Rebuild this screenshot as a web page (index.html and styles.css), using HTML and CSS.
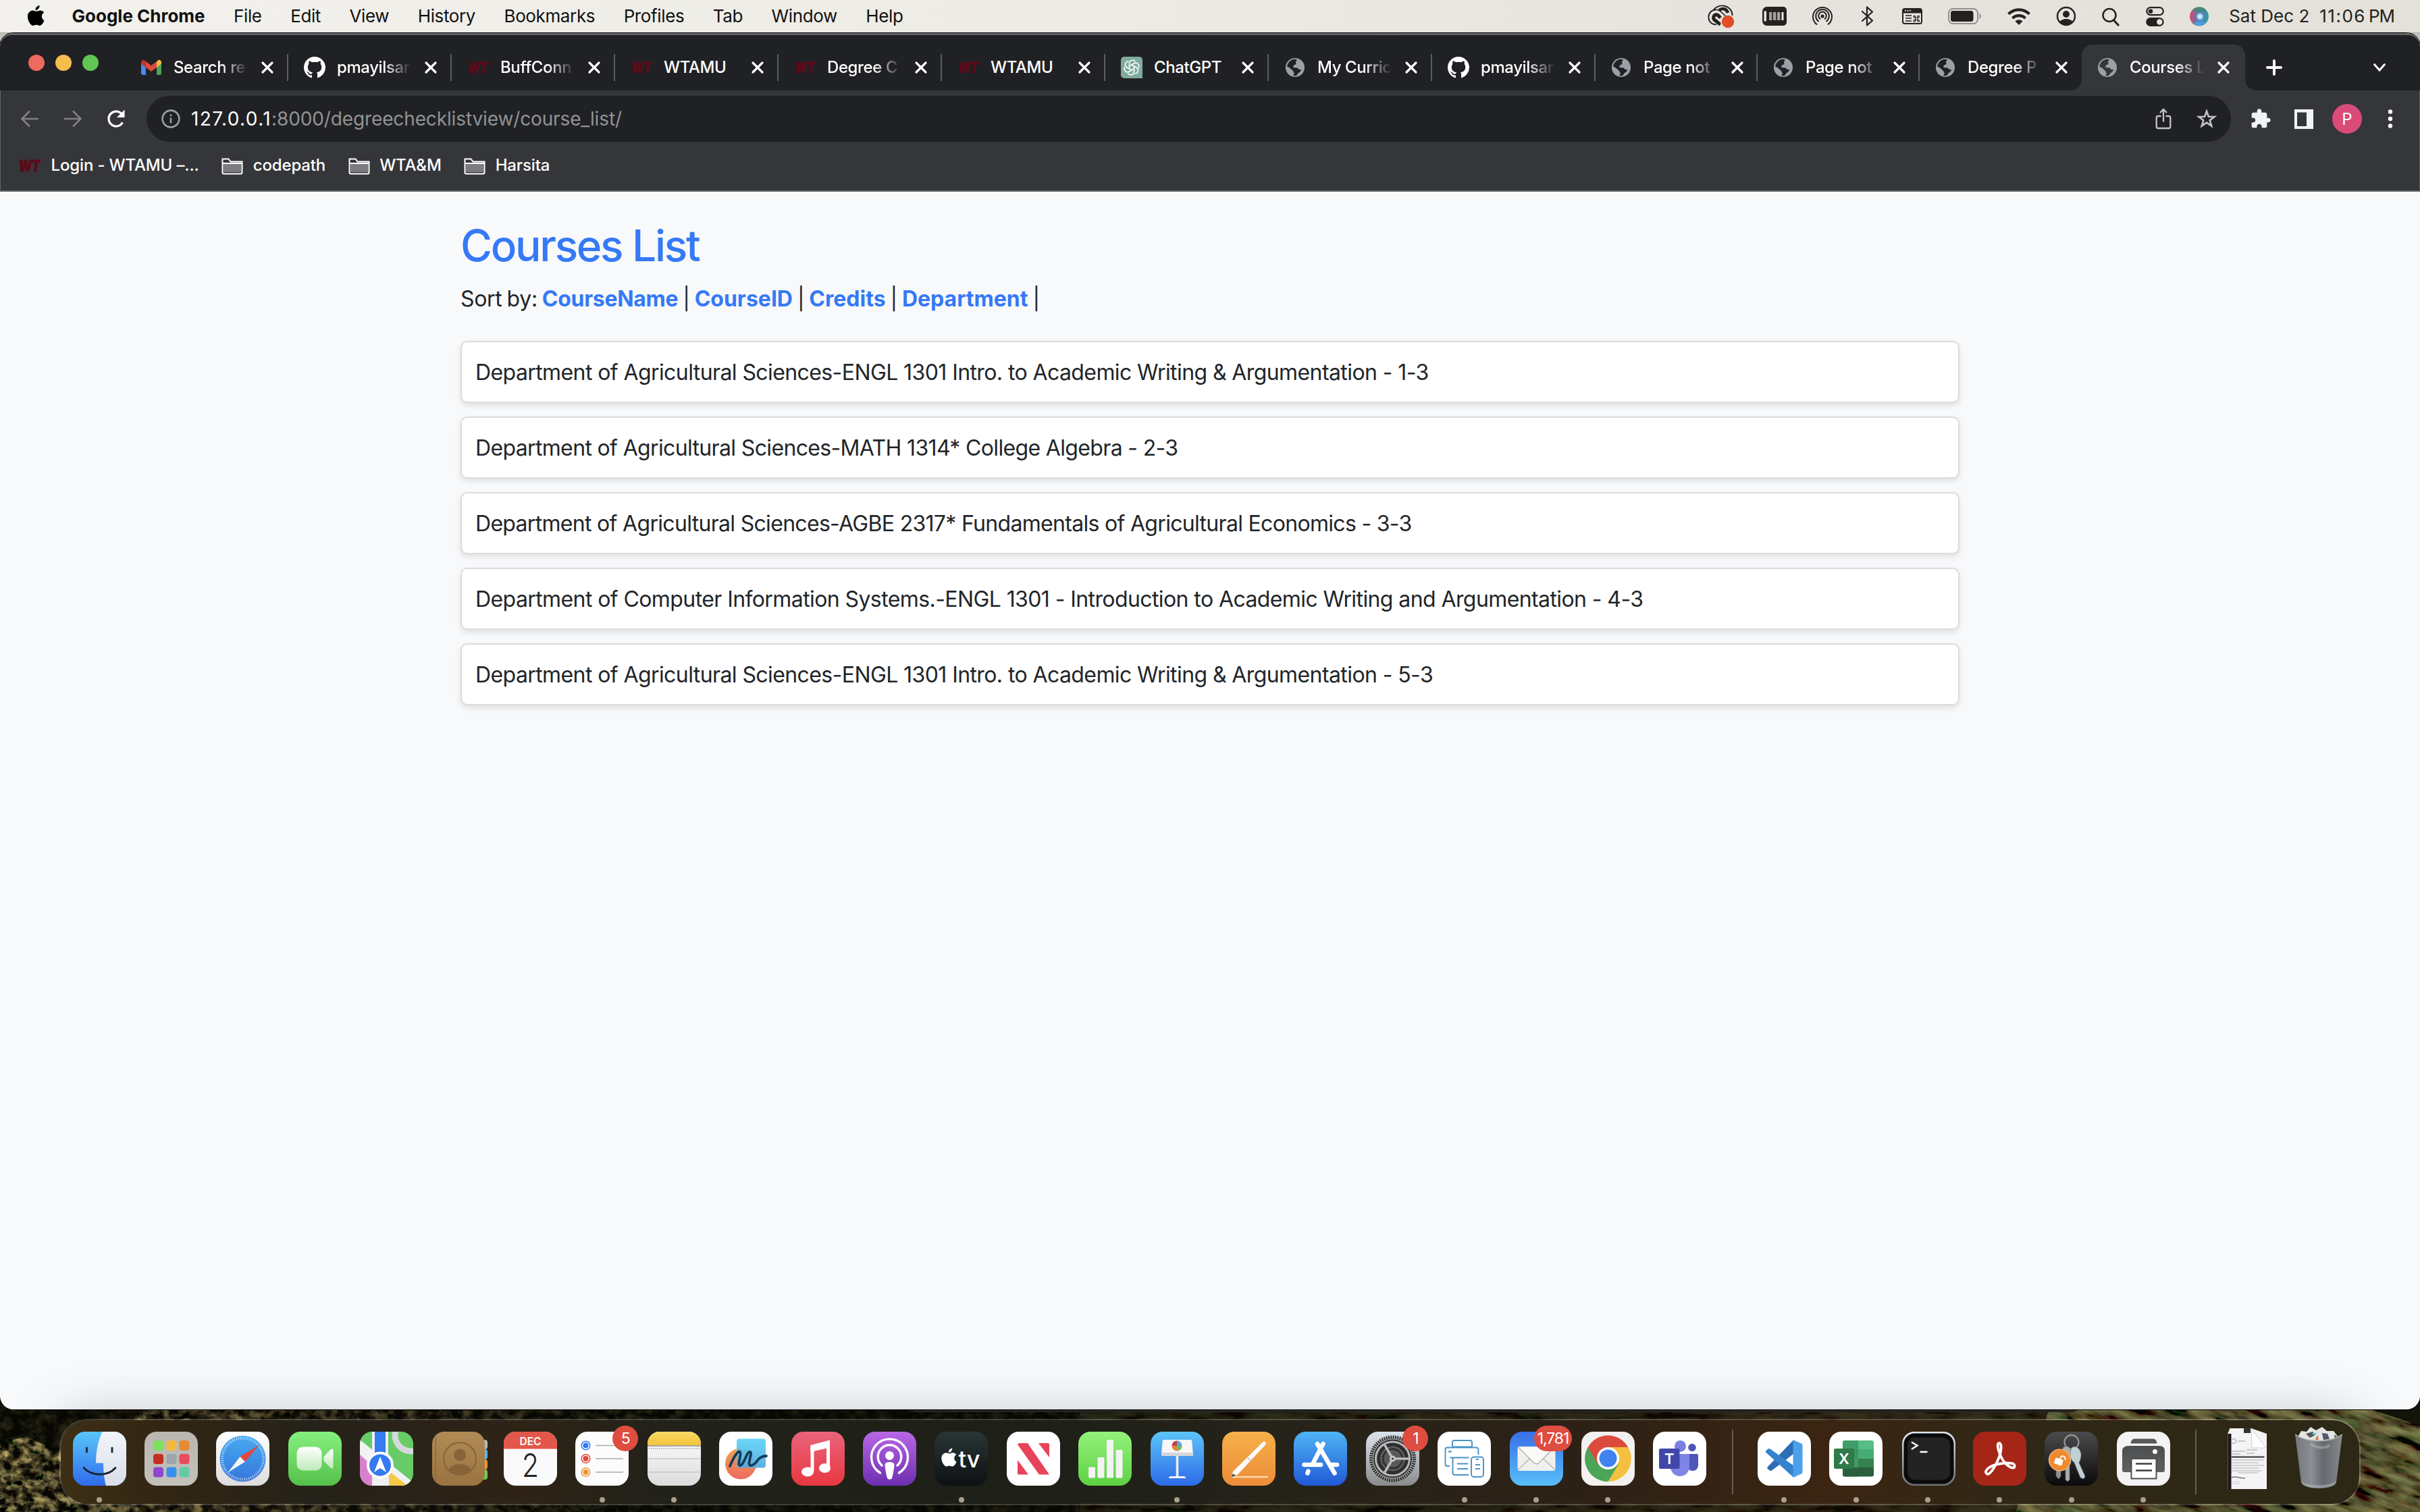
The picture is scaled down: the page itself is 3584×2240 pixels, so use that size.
FILE: index.html
```html
<!DOCTYPE html>
<html lang="en">
<head>
<meta charset="utf-8">
<title>Courses List</title>
<link rel="stylesheet" href="styles.css">
</head>
<body>
<svg class="defs" width="0" height="0" aria-hidden="true">
  <defs>
    <linearGradient id="gBlue" x1="0" y1="0" x2="0" y2="1"><stop offset="0" stop-color="#5cc4f8"/><stop offset="1" stop-color="#2d6be8"/></linearGradient>
    <linearGradient id="gFinder" x1="0" y1="0" x2="0" y2="1"><stop offset="0" stop-color="#59c5fa"/><stop offset="1" stop-color="#2f6cec"/></linearGradient>
    <linearGradient id="gFace" x1="0" y1="0" x2="0" y2="1"><stop offset="0" stop-color="#f2f5fb"/><stop offset="1" stop-color="#d9dde8"/></linearGradient>
    <linearGradient id="gWhite" x1="0" y1="0" x2="0" y2="1"><stop offset="0" stop-color="#ffffff"/><stop offset="1" stop-color="#dcdcdc"/></linearGradient>
    <linearGradient id="gGreen" x1="0" y1="0" x2="0" y2="1"><stop offset="0" stop-color="#86f07f"/><stop offset="1" stop-color="#54c14b"/></linearGradient>
    <linearGradient id="gSafari" x1="0" y1="0" x2="0" y2="1"><stop offset="0" stop-color="#47a9f0"/><stop offset="1" stop-color="#3577dc"/></linearGradient>
    <linearGradient id="gCam" x1="0" y1="0" x2="0" y2="1"><stop offset="0" stop-color="#ffffff"/><stop offset="1" stop-color="#bfeab9"/></linearGradient>
    <linearGradient id="gBrown" x1="0" y1="0" x2="0" y2="1"><stop offset="0" stop-color="#b18b56"/><stop offset="1" stop-color="#9a7340"/></linearGradient>
    <linearGradient id="gYellow" x1="0" y1="0" x2="0" y2="1"><stop offset="0" stop-color="#f9d965"/><stop offset="1" stop-color="#f5c43a"/></linearGradient>
    <linearGradient id="gMusic" x1="0" y1="0" x2="0" y2="1"><stop offset="0" stop-color="#ea647b"/><stop offset="1" stop-color="#e8373f"/></linearGradient>
    <linearGradient id="gPod" x1="0" y1="0" x2="0" y2="1"><stop offset="0" stop-color="#b967e6"/><stop offset="1" stop-color="#6c2fb0"/></linearGradient>
    <linearGradient id="gTv" x1="0" y1="0" x2="0" y2="1"><stop offset="0" stop-color="#2a3535"/><stop offset="1" stop-color="#0d1114"/></linearGradient>
    <linearGradient id="gNumbers" x1="0" y1="0" x2="0" y2="1"><stop offset="0" stop-color="#93f27b"/><stop offset="1" stop-color="#5ed043"/></linearGradient>
    <linearGradient id="gPages" x1="0" y1="0" x2="0" y2="1"><stop offset="0" stop-color="#f4b14a"/><stop offset="1" stop-color="#ee8c38"/></linearGradient>
    <linearGradient id="gStore" x1="0" y1="0" x2="0" y2="1"><stop offset="0" stop-color="#4fb4f5"/><stop offset="1" stop-color="#2059d6"/></linearGradient>
    <linearGradient id="gSet" x1="0" y1="0" x2="0" y2="1"><stop offset="0" stop-color="#dbe3ea"/><stop offset="1" stop-color="#8b8b8d"/></linearGradient>
    <linearGradient id="gMail" x1="0" y1="0" x2="0" y2="1"><stop offset="0" stop-color="#3a6fe8"/><stop offset="1" stop-color="#58bffa"/></linearGradient>
    <linearGradient id="gFree" x1="0" y1="0" x2="0" y2="1"><stop offset="0" stop-color="#f0a24a"/><stop offset="1" stop-color="#ed6a62"/></linearGradient>
    <linearGradient id="gFree2" x1="0" y1="0" x2="0" y2="1"><stop offset="0" stop-color="#5fd4f7"/><stop offset="1" stop-color="#54a9e0"/></linearGradient>
    <linearGradient id="gKey" x1="0" y1="0" x2="0" y2="1"><stop offset="0" stop-color="#4b4b4d"/><stop offset="1" stop-color="#0a0a0b"/></linearGradient>
    <linearGradient id="gTerm" x1="0" y1="0" x2="0" y2="1"><stop offset="0" stop-color="#dfeaf2"/><stop offset="1" stop-color="#6e7072"/></linearGradient>
    <linearGradient id="gTrash" x1="0" y1="0" x2="1" y2="0"><stop offset="0" stop-color="#74777b"/><stop offset=".35" stop-color="#8b8e92"/><stop offset=".6" stop-color="#65696e"/><stop offset="1" stop-color="#868a8e"/></linearGradient>
    <linearGradient id="gPrn" x1="0" y1="0" x2="0" y2="1"><stop offset="0" stop-color="#4d4e50"/><stop offset="1" stop-color="#5f6062"/></linearGradient>
    <linearGradient id="gPad" x1="0" y1="0" x2="0" y2="1"><stop offset="0" stop-color="#b9b7b0"/><stop offset="1" stop-color="#c3c1bb"/></linearGradient>
    <radialGradient id="gSiri"><stop offset="0" stop-color="#fff"/><stop offset=".35" stop-color="#9fd8f4"/><stop offset=".7" stop-color="#4a7fc9" stop-opacity=".5"/><stop offset="1" stop-color="#3a5a8c" stop-opacity="0"/></radialGradient>
    <linearGradient id="gSiri2" x1="0" y1=".3" x2="1" y2=".6"><stop offset="0" stop-color="#e2457c"/><stop offset=".45" stop-color="#7a6f94"/><stop offset="1" stop-color="#2f9fb0"/></linearGradient>
    <clipPath id="sq"><rect width="79" height="80" rx="18"/></clipPath>
    <symbol id="globe" viewBox="0 0 32 32"><circle cx="16" cy="16" r="14" fill="#9aa0a6"/><path d="M4 14.500c1-5 4-9 9-10.500 3-.5 5 0 6 1l-2 2 .5 4-4 2v3l6 .5 2.500 2.500h3c-.5 3-2 4-4 5l-3 4c-2 .5-4 .3-5-.3l2-2.500-2-4.200-5-4.500z" fill="var(--tab-bg)"/><path d="M17.500 11.200c1.500-.6 1-2.500 1-3.500l3.500-2c3 1.500 5 5 5 8.300l-3.500 3-3-2.500-3-.5z" fill="#9aa0a6"/></symbol>
    <symbol id="wt" viewBox="0 0 36 32"><text x="1" y="25" font-family="Inter, sans-serif" font-weight="900" font-style="italic" font-size="25" textLength="33" lengthAdjust="spacingAndGlyphs" fill="#5a0b1a" stroke="#5a0b1a" stroke-width="1.200">WT</text></symbol>
    <symbol id="github" viewBox="0 0 16 16"><path fill="#fff" d="M8 0C3.580 0 0 3.580 0 8c0 3.540 2.290 6.530 5.470 7.590.4.070.55-.17.55-.38 0-.19-.01-.82-.01-1.490-2.010.37-2.530-.49-2.690-.94-.09-.23-.48-.94-.82-1.130-.28-.15-.68-.52-.01-.53.63-.01 1.080.58 1.230.82.72 1.210 1.870.87 2.330.66.070-.52.28-.87.51-1.070-1.780-.2-3.640-.89-3.640-3.950 0-.87.31-1.590.82-2.150-.08-.2-.36-1.020.08-2.120 0 0 .67-.21 2.200.82.64-.18 1.320-.27 2-.27s1.360.09 2 .27c1.530-1.040 2.200-.82 2.200-.82.44 1.100.16 1.920.08 2.120.51.56.82 1.270.82 2.150 0 3.070-1.870 3.750-3.650 3.950.29.25.54.73.54 1.480 0 1.070-.01 1.930-.01 2.200 0 .21.15.46.55.38A8.010 8.010 0 0 0 16 8c0-4.420-3.580-8-8-8z"/></symbol>
    <symbol id="gmail" viewBox="0 0 32 32"><path d="M1 8v16.500C1 26 2 27 3.500 27H8V15z" fill="#4c86ee"/><path d="M31 8v16.500c0 1.500-1 2.500-2.500 2.500H24V15z" fill="#4aa659"/><path d="M24 8v8l7-5.500V8c0-3-3.400-4.300-5.500-2.500z" fill="#f2bd42"/><path d="M8 8v8l8 6 8-6V7l-8 6-8-6z" fill="#dc4b3f"/><path d="M8 16V7L6.500 5.500C4.400 3.700 1 5 1 8v2.500z" fill="#b5362b"/></symbol>
    <symbol id="gpt" viewBox="0 0 32 32"><path d="M5 0h22a5 5 0 0 1 5 5v27H5a5 5 0 0 1-5-5V5a5 5 0 0 1 5-5z" fill="#7fab9d"/><g fill="none" stroke="#fff" stroke-width="1.600"><path d="M12.500 17.800V10c0-5.500 7-6.500 9-2.500"/><path d="M12.500 17.800V10c0-5.500 7-6.500 9-2.500" transform="rotate(60 16 16)"/><path d="M12.500 17.800V10c0-5.500 7-6.500 9-2.500" transform="rotate(120 16 16)"/><path d="M12.500 17.800V10c0-5.500 7-6.500 9-2.500" transform="rotate(180 16 16)"/><path d="M12.500 17.800V10c0-5.500 7-6.500 9-2.500" transform="rotate(240 16 16)"/><path d="M12.500 17.800V10c0-5.500 7-6.500 9-2.500" transform="rotate(300 16 16)"/></g></symbol>
    <symbol id="close" viewBox="0 0 20 20"><path d="M3 3l14 14M17 3L3 17" stroke="#fff" stroke-width="3.200" stroke-linecap="round"/></symbol>
    <symbol id="folder" viewBox="0 0 32 26"><path d="M1.500 22.500v-20h9l3 4h17v16a2 2 0 0 1-2 2h-25a2 2 0 0 1-2-2z" fill="#35363a" stroke="#fff" stroke-width="2"/><path d="M3 10h26v12H3z" fill="#7b7c7f"/><path d="M2 9h28" stroke="#fff" stroke-width="2"/></symbol>
    <symbol id="apple" viewBox="0 0 26 30"><path d="M17.500 0c.2 2-.5 3.700-1.600 5-1.100 1.300-2.700 2.200-4.300 2.100-.2-1.900.6-3.700 1.600-4.800C14.300 1 16 .1 17.500 0zM24.500 22.500c-.7 1.700-1.100 2.400-2 3.800-1.300 1.900-3 3.700-5 3.700-1.900 0-2.400-1.200-4.800-1.200S9.700 30 7.900 30c-2 0-3.600-1.900-4.900-3.800C-.5 21-1 14.500 1.200 11.200 2.700 8.900 5.100 7.500 7.400 7.500c2.300 0 3.700 1.300 5.600 1.300 1.900 0 3-1.300 5.700-1.300 2 0 4.100 1.100 5.600 3-5 2.700-4.200 9.800.2 12z"/></symbol>
  </defs>
</svg>

<svg class="wallpaper" viewBox="0 0 3584 172" preserveAspectRatio="none" aria-hidden="true">
  <defs>
    <filter id="leaf" x="0" y="0" width="100%" height="100%"><feTurbulence type="fractalNoise" baseFrequency=".06 .08" numOctaves="5" seed="7"/><feColorMatrix values="1.400 0 0 0 -.42  1.050 .1 0 0 -.36  .4 0 0 0 -.12  0 3 0 0 -1"/></filter>
    <filter id="grass" x="0" y="0" width="100%" height="100%"><feTurbulence type="fractalNoise" baseFrequency=".02 .08" numOctaves="5" seed="3"/><feColorMatrix values=".8 .2 0 0 -.33  .85 0 .1 0 -.32  .3 0 0 0 -.1  0 0 0 0 1"/></filter>
    <linearGradient id="wBase" x1="0" x2="1" y1="0" y2="0"><stop offset="0" stop-color="#070803"/><stop offset=".1" stop-color="#0e0b05"/><stop offset=".3" stop-color="#070a04"/><stop offset=".55" stop-color="#0b0a04"/><stop offset=".75" stop-color="#180f06"/><stop offset="1" stop-color="#14140a"/></linearGradient>
    <linearGradient id="mLeaf" x1="0" x2="1" y1="0" y2="0"><stop offset="0" stop-color="#fff"/><stop offset=".1" stop-color="#888"/><stop offset=".3" stop-color="#222"/><stop offset="1" stop-color="#222"/></linearGradient>
    <mask id="mk"><rect width="3584" height="172" fill="url(#mLeaf)"/><path d="M0 0h210l-20 60-110 20-40-20-40 10z" fill="#000" opacity=".8"/></mask>
  </defs>
  <rect width="3584" height="172" fill="url(#wBase)"/>
  <rect width="1600" height="172" filter="url(#leaf)" mask="url(#mk)"/>
  <rect x="1600" width="1500" height="172" filter="url(#grass)" opacity=".25"/>
  <g transform="translate(3080 -120) rotate(18)"><rect width="600" height="330" filter="url(#grass)" opacity=".75"/></g>
  <path d="M1346 20h1732q-4 4-12 4H1358q-8 0-12-4z" fill="#2a2a2a"/>
</svg>

<header class="menubar">
  <nav class="menus">
    <svg class="apple" viewBox="0 0 26 30"><use href="#apple"/></svg>
    <span class="menu app-name">Google Chrome</span>
    <span class="menu">File</span>
    <span class="menu">Edit</span>
    <span class="menu">View</span>
    <span class="menu">History</span>
    <span class="menu">Bookmarks</span>
    <span class="menu">Profiles</span>
    <span class="menu">Tab</span>
    <span class="menu">Window</span>
    <span class="menu">Help</span>
  </nav>
  <div class="status">
    <svg width="44" height="36" viewBox="0 0 44 36"><g fill="none" stroke="#232220"><path d="M14 30.500h-1C-1.500 29.500-1 9 13 8.500" stroke-width="2"/><path d="M10 8.500C20-3 38 3 37.500 17" stroke-width="2"/><path d="M13 8.500c4-.3 6 1 9 4l8 8" stroke-width="1.600"/><path d="M20 30c-3-1-5-4-7.500-5.500-5-3-2.500-10 2.500-8.500 2 .6 3 2 5 4.500" stroke-width="5"/><path d="M18 9c5-4 11-2 13 4" stroke-width="4.500"/></g><circle cx="31" cy="26" r="9.200" fill="#e04d28"/></svg>
    <svg width="36" height="36" viewBox="0 0 36 36"><path d="M7 4h24a5 5 0 0 1 5 5v18a5 5 0 0 1-5 5H7c-4 0-7-3-7-8V12c0-5 3-8 7-8z" fill="#232220"/><path d="M2.500 10.500h3.500v15H2.500zM10.500 12h1.800v12h-1.800zm2.700 0h1v12h-1zm3.300 0h1.800v12h-1.800zm2.700 0h1v12h-1zm3.300 0h1.800v12h-1.800zm2.700 0h1v12h-1zm3.300 0h3v12h-3z" fill="#e8e5df"/></svg>
    <svg width="30" height="36" viewBox="0 0 30 36"><g fill="none" stroke="#232220" stroke-width="2" stroke-linecap="round"><path d="M6.500 30a14 14 0 1 1 17 0"/><path d="M9 25.500a9.800 9.800 0 1 1 12 0"/><path d="M11.500 22a5.800 5.800 0 1 1 7 0"/></g><circle cx="15" cy="18" r="2.600" fill="#232220"/></svg>
    <svg width="27" height="36" viewBox="0 0 27 36"><path d="M6 11l15 13.500-8 7V4.500l8 7L6 25" fill="none" stroke="#232220" stroke-width="2.300" stroke-linejoin="round" stroke-linecap="round"/></svg>
    <svg width="30" height="36" viewBox="0 0 30 36"><rect x="1" y="7" width="28" height="22" rx="3" fill="none" stroke="#232220" stroke-width="2"/><path d="M1 8h28v5.500H1z" fill="#232220"/><path d="M5 17h9M5 21h9M5 25h9" stroke="#232220" stroke-width="1.600"/><path d="M19.500 19.500v4.500m3.500-4.500v4.500M19 20h4.500M19 23.500h4.500" stroke="#232220" stroke-width="1.200"/><g fill="none" stroke="#232220" stroke-width="1.200"><circle cx="18.300" cy="18.600" r="1.300"/><circle cx="24.200" cy="18.600" r="1.300"/><circle cx="18.300" cy="24.800" r="1.300"/><circle cx="24.200" cy="24.800" r="1.300"/></g><g fill="#e8e5df"><circle cx="5" cy="9.800" r="1.100"/><circle cx="8.500" cy="9.800" r="1.100"/><circle cx="12" cy="9.800" r="1.100"/></g></svg>
    <svg width="50" height="36" viewBox="0 0 50 36"><rect x="1" y="7" width="43" height="22" rx="6.500" fill="none" stroke="#918f8b" stroke-width="2"/><rect x="4" y="10" width="33.500" height="16" rx="3.500" fill="#232220"/><path d="M46.500 14c3 1 3 7 0 8z" fill="#918f8b"/></svg>
    <svg width="34" height="36" viewBox="0 0 34 36"><g fill="none" stroke="#232220" stroke-width="4.200"><path d="M1.500 14.800c9-8.600 22-8.600 31 0"/><path d="M7.500 21c5.500-5.200 13.500-5.200 19 0"/></g><path d="M11.500 25.500c3.500-3 7.500-3 11 0L17 31z" fill="#232220"/></svg>
    <svg width="30" height="36" viewBox="0 0 30 36"><circle cx="15" cy="18" r="13" fill="none" stroke="#232220" stroke-width="2.400"/><circle cx="15" cy="15" r="5" fill="#232220"/><path d="M5 26.500c4-6 16-6 20 0-5 5.500-15 5.500-20 0z" fill="#232220"/></svg>
    <svg width="26" height="36" viewBox="0 0 26 36"><circle cx="11" cy="16.500" r="9.500" fill="none" stroke="#232220" stroke-width="2.500"/><path d="M17.500 24l6.500 7" stroke="#232220" stroke-width="3.200" stroke-linecap="round"/></svg>
    <svg width="28" height="36" viewBox="0 0 28 36"><rect x="2.300" y="5.200" width="24.500" height="11" rx="5.500" fill="none" stroke="#232220" stroke-width="2.200"/><circle cx="8" cy="10.700" r="3.300" fill="#232220"/><rect x="1.200" y="20" width="26.500" height="13" rx="6.500" fill="#232220"/><circle cx="21.300" cy="26.500" r="4.200" fill="#e8e5df"/></svg>
    <svg width="28" height="36" viewBox="0 0 28 36"><circle cx="14" cy="18.500" r="14" fill="url(#gSiri2)"/><path d="M3 10C8 3 20 2 25 10c-8 4-14 4-22 0z" fill="#3a8f78" opacity=".8"/><path d="M6 29c5 5 13 4 17-1-5-5-12-5-17 1z" fill="#4aa0e6" opacity=".9"/><circle cx="15" cy="18.500" r="9.500" fill="url(#gSiri)"/></svg>
    <div class="clock"><span>Sat Dec 2</span><span class="time">11:06</span><span class="pm">PM</span></div>
  </div>
</header>

<main class="window">
  <div class="chrome">
    <div class="tabstrip">
      <div class="lights"><i class="red"></i><i class="amber"></i><i class="green"></i></div>
      <div class="tab"><svg class="fav"><use href="#gmail"/></svg><span class="title">Search re</span><svg class="x"><use href="#close"/></svg><i class="sep"></i></div>
      <div class="tab"><svg class="fav"><use href="#github"/></svg><span class="title">pmayilsar</span><svg class="x"><use href="#close"/></svg><i class="sep"></i></div>
      <div class="tab"><svg class="fav"><use href="#wt"/></svg><span class="title">BuffConn</span><svg class="x"><use href="#close"/></svg><i class="sep"></i></div>
      <div class="tab"><svg class="fav"><use href="#wt"/></svg><span class="title full">WTAMU</span><svg class="x"><use href="#close"/></svg><i class="sep"></i></div>
      <div class="tab"><svg class="fav"><use href="#wt"/></svg><span class="title">Degree C</span><svg class="x"><use href="#close"/></svg><i class="sep"></i></div>
      <div class="tab"><svg class="fav"><use href="#wt"/></svg><span class="title full">WTAMU</span><svg class="x"><use href="#close"/></svg><i class="sep"></i></div>
      <div class="tab"><svg class="fav"><use href="#gpt"/></svg><span class="title full">ChatGPT</span><svg class="x"><use href="#close"/></svg><i class="sep"></i></div>
      <div class="tab"><svg class="fav"><use href="#globe"/></svg><span class="title">My Curric</span><svg class="x"><use href="#close"/></svg><i class="sep"></i></div>
      <div class="tab"><svg class="fav"><use href="#github"/></svg><span class="title">pmayilsar</span><svg class="x"><use href="#close"/></svg><i class="sep"></i></div>
      <div class="tab narrow"><svg class="fav"><use href="#globe"/></svg><span class="title">Page not</span><svg class="x"><use href="#close"/></svg><i class="sep"></i></div>
      <div class="tab narrow"><svg class="fav"><use href="#globe"/></svg><span class="title">Page not</span><svg class="x"><use href="#close"/></svg><i class="sep"></i></div>
      <div class="tab narrow"><svg class="fav"><use href="#globe"/></svg><span class="title">Degree P</span><svg class="x"><use href="#close"/></svg></div>
      <div class="tab narrow active"><svg class="fav"><use href="#globe"/></svg><span class="title">Courses L</span><svg class="x"><use href="#close"/></svg></div>
      <svg class="plus" viewBox="0 0 26 26"><path d="M13 3v20M3 13h20" stroke="#fff" stroke-width="4" stroke-linecap="round"/></svg>
      <svg class="chev" viewBox="0 0 20 14"><path d="M2.500 2.500L10 11l7.500-8.500" fill="none" stroke="#fff" stroke-width="3" stroke-linecap="round"/></svg>
    </div>
    <div class="toolbar">
      <span class="btn"><svg width="28" height="28" viewBox="0 0 28 28"><path d="M27 14H3M14 2.500L2.500 14 14 25.500" fill="none" stroke="#808184" stroke-width="2.600"/></svg></span>
      <span class="btn"><svg width="28" height="28" viewBox="0 0 28 28"><path d="M1 14h24M14 2.500L25.500 14 14 25.500" fill="none" stroke="#808184" stroke-width="2.600"/></svg></span>
      <span class="btn"><svg width="30" height="30" viewBox="0 0 30 30"><path d="M24.500 20.500A11 11 0 1 1 22.500 7l3 3" fill="none" stroke="#fff" stroke-width="3.200"/><path d="M27.500 1.500v11.500H16z" fill="#fff"/></svg></span>
      <div class="omnibox">
        <svg class="info" width="28" height="28" viewBox="0 0 28 28"><circle cx="14" cy="14" r="12.400" fill="none" stroke="#9aa0a6" stroke-width="2.600"/><path d="M12.700 12.500h2.600v8h-2.600zm0-5h2.600v2.700h-2.600z" fill="#9aa0a6"/></svg>
        <span class="url"><b>127.0.0.1</b>:8000/degreechecklistview/course_list/</span>
        <svg class="share" width="24" height="32" viewBox="0 0 24 32"><path d="M8.500 12H4.200A2.500 2.500 0 0 0 1.700 14.500v13A2.500 2.500 0 0 0 4.200 30h15.600a2.500 2.500 0 0 0 2.500-2.500v-13a2.500 2.500 0 0 0-2.500-2.500h-4.300M12 20.500V2.500M7 7l5-5 5 5" fill="none" stroke="#c3c4c6" stroke-width="2.300"/></svg>
        <svg class="star" width="30" height="30" viewBox="0 0 30 30"><path d="M15 3.800l2.900 8 8.600.2-6.800 5.200 2.500 8.300-7.200-4.900-7.200 4.900 2.500-8.300-6.800-5.200 8.600-.2z" fill="none" stroke="#c3c4c6" stroke-width="2.600"/></svg>
      </div>
      <span class="btn"><svg width="32" height="32" viewBox="0 0 24 24"><path fill="#f1f3f4" d="M20.500 11H19V7c0-1.100-.9-2-2-2h-4V3.500C13 2.120 11.880 1 10.500 1S8 2.120 8 3.500V5H4c-1.100 0-1.990.9-1.990 2v3.800H3.500c1.490 0 2.700 1.210 2.700 2.700s-1.210 2.700-2.700 2.700H2V20c0 1.100.9 2 2 2h3.800v-1.500c0-1.490 1.210-2.700 2.700-2.700s2.700 1.210 2.700 2.700V22H17c1.100 0 2-.9 2-2v-4h1.500c1.380 0 2.500-1.120 2.500-2.500S21.880 11 20.500 11z"/></svg></span>
      <span class="btn"><svg width="28" height="29" viewBox="0 0 28 29"><path d="M0 0h28v29H0zM4 4.500v20.500h14V4.500z" fill="#f1f3f4" fill-rule="evenodd"/></svg></span>
      <span class="btn"><span class="avatar">P</span></span>
      <span class="btn"><svg width="8" height="28" viewBox="0 0 8 28"><g fill="#fff"><circle cx="4" cy="3.500" r="3.200"/><circle cx="4" cy="14" r="3.200"/><circle cx="4" cy="24.500" r="3.200"/></g></svg></span>
    </div>
    <div class="bookmarks">
      <span class="bm"><svg width="36" height="30"><use href="#wt"/></svg><span>Login - WTAMU –...</span></span>
      <span class="bm"><svg width="34" height="26"><use href="#folder"/></svg><span>codepath</span></span>
      <span class="bm"><svg width="34" height="26"><use href="#folder"/></svg><span>WTA&amp;M</span></span>
      <span class="bm"><svg width="34" height="26"><use href="#folder"/></svg><span>Harsita</span></span>
    </div>
  </div>
  <section class="page">
    <div class="container">
      <h1>Courses List</h1>
      <p class="sort">Sort by: <a>CourseName</a> | <a>CourseID</a> | <a>Credits</a> | <a>Department</a> |</p>
      <ul class="courses">
        <li>Department of Agricultural Sciences-ENGL 1301 Intro. to Academic Writing &amp; Argumentation - 1-3</li>
        <li>Department of Agricultural Sciences-MATH 1314* College Algebra - 2-3</li>
        <li>Department of Agricultural Sciences-AGBE 2317* Fundamentals of Agricultural Economics - 3-3</li>
        <li>Department of Computer Information Systems.-ENGL 1301 - Introduction to Academic Writing and Argumentation - 4-3</li>
        <li>Department of Agricultural Sciences-ENGL 1301 Intro. to Academic Writing &amp; Argumentation - 5-3</li>
      </ul>
    </div>
  </section>
</main>

<footer class="dock">
  <div class="app run"><svg viewBox="0 0 79 80"><g clip-path="url(#sq)"><rect width="79" height="80" fill="url(#gFinder)"/><path d="M43.500 0C37 14 34 30 34 46.500h11C45 60 46.500 71 49 80h30V0z" fill="url(#gFace)"/></g><path d="M20.500 24v6M58 24v6" stroke="#222c3c" stroke-width="3" stroke-linecap="round"/><path d="M16 53.500c12 13 36 13 47 0" fill="none" stroke="#1b2330" stroke-width="2.800" stroke-linecap="round"/></svg></div>
  <div class="app"><svg viewBox="0 0 79 80"><rect width="79" height="80" rx="18" fill="url(#gPad)"/><g><rect x="13" y="13" width="15" height="15" rx="4" fill="#7fe05f"/><rect x="32.500" y="13" width="15" height="15" rx="4" fill="#f3bb3e"/><rect x="51.500" y="13" width="15" height="15" rx="4" fill="#e78a32"/><rect x="13" y="33" width="15" height="15" rx="4" fill="#c42f22"/><rect x="32.500" y="33" width="15" height="15" rx="4" fill="#9da5ab"/><rect x="51.500" y="33" width="15" height="15" rx="4" fill="#ea4b5f"/><rect x="13" y="52.500" width="15" height="15" rx="4" fill="#8e48cf"/><rect x="32.500" y="52.500" width="15" height="15" rx="4" fill="#3590ee"/><rect x="51.500" y="52.500" width="15" height="15" rx="4" fill="#62cba6"/></g></svg></div>
  <div class="app"><svg viewBox="0 0 79 80"><rect width="79" height="80" rx="18" fill="url(#gWhite)"/><circle cx="39.500" cy="40" r="34" fill="url(#gSafari)"/><circle cx="39.500" cy="40" r="30.500" fill="none" stroke="#fff" stroke-width="4" stroke-dasharray=".9 2.290" opacity=".85"/><path d="M63.500 20L43 44.500 35.500 37z" fill="#e2463c"/><path d="M17.500 60.500L35.500 37 43 44.500z" fill="#f5f5f5"/></svg></div>
  <div class="app"><svg viewBox="0 0 79 80"><rect width="79" height="80" rx="18" fill="url(#gGreen)"/><rect x="12.500" y="22.500" width="37" height="35" rx="9" fill="url(#gCam)"/><path d="M52.500 37l10-10.500c2-2 4-1 4 1.500v24c0 2.500-2 3.500-4 1.500L52.500 43z" fill="url(#gCam)"/></svg></div>
  <div class="app"><svg viewBox="0 0 79 80"><g clip-path="url(#sq)"><rect width="79" height="80" fill="#67cb68"/><path d="M0 12l80 64v20H40L0 58z" fill="#f2f2f4"/><path d="M0 34l20 18v30H0z" fill="#d980cc"/><path d="M43 58l30 24H43z" fill="#f5c945"/><circle cx="76" cy="5" r="24" fill="none" stroke="#d5d8dc" stroke-width="9"/><path d="M18 0h24v80H18z" fill="#eef0f2"/><path d="M22 0h16v40H22z" fill="#347cf0"/></g><circle cx="30" cy="49.500" r="20" fill="#f7f9fc"/><circle cx="30" cy="49.500" r="16" fill="#3579ee"/><path d="M30 37l9 23-9-6-9 6z" fill="#fff"/></svg></div>
  <div class="app"><svg viewBox="0 0 79 80"><rect x="62" y="12" width="20" height="14" rx="4" fill="#b9babb"/><rect x="62" y="26" width="20" height="15" rx="4" fill="#5bb8ee"/><rect x="62" y="41" width="20" height="15" rx="4" fill="#ef9430"/><rect x="62" y="56" width="20" height="15" rx="4" fill="#6fce57"/><rect width="78" height="80" rx="18" fill="url(#gBrown)"/><path d="M5 8v64" stroke="#8c683a" stroke-width="1.500"/><circle cx="41" cy="40" r="24" fill="none" stroke="#866339" stroke-width="2"/><circle cx="41" cy="34.500" r="9" fill="#866339"/><path d="M24 57c4-12 30-12 34 0-9 9-25 9-34 0z" fill="#866339"/></svg></div>
  <div class="app"><svg viewBox="0 0 79 80"><g clip-path="url(#sq)"><rect width="79" height="80" fill="#fafafa"/><rect width="79" height="25.500" fill="#e3574b"/></g><text x="39.500" y="19.500" text-anchor="middle" font-size="15.500" font-weight="600" fill="#fff" textLength="32">DEC</text><text x="39.500" y="67" text-anchor="middle" font-size="48" font-weight="300" fill="#222" textLength="25" lengthAdjust="spacingAndGlyphs">2</text></svg></div>
  <div class="app run"><svg viewBox="0 0 79 80"><rect width="79" height="80" rx="18" fill="#fcfcfc"/><g fill="none" stroke-width="1.500"><circle cx="15.500" cy="20.500" r="6.300" stroke="#3579ee"/><circle cx="15.500" cy="40" r="6.300" stroke="#e2463c"/><circle cx="15.500" cy="60" r="6.300" stroke="#ee9332"/></g><circle cx="15.500" cy="20.500" r="4" fill="#3579ee"/><circle cx="15.500" cy="40" r="4" fill="#e2463c"/><circle cx="15.500" cy="60" r="4" fill="#ee9332"/><path d="M30 20.500h41M30 40h41M30 60h41" stroke="#a9a9ab" stroke-width="1.300"/></svg><span class="badge">5</span></div>
  <div class="app run"><svg viewBox="0 0 79 80"><g clip-path="url(#sq)"><rect width="79" height="80" fill="url(#gWhite)"/><rect width="79" height="20" fill="url(#gYellow)"/><path d="M0 21h79" stroke="#8f8a80" stroke-width="1.500"/><path d="M2 25h76" stroke="#aaa59b" stroke-width="1.500" stroke-dasharray="1.500 1.500"/><path d="M0 40h79M0 60h79" stroke="#c9c7c3" stroke-width="1.500"/></g></svg></div>
  <div class="app"><svg viewBox="0 0 79 80"><rect width="79" height="80" rx="18" fill="#fff"/><circle cx="32" cy="47.500" r="23" fill="url(#gFree)"/><rect x="26" y="10.500" width="43" height="43" rx="4" fill="url(#gFree2)" opacity=".93"/><path d="M16 51c5-12 12-24 15-21 3 3-5 20 0 20 6 0 10-22 15-20 4 2-5 18 0 20 5 1 10-6 12-9 3-3 8-5 12-5" fill="none" stroke="#123c5e" stroke-width="3.800" stroke-linecap="round"/></svg></div>
  <div class="app"><svg viewBox="0 0 79 80"><rect width="79" height="80" rx="18" fill="url(#gMusic)"/><path d="M31 58.500V23.500L54.500 17.500V51.500" fill="none" stroke="#fff" stroke-width="5"/><path d="M28.500 20L57 12.500v11L28.500 30z" fill="#fff"/><ellipse cx="24" cy="59.500" rx="9" ry="7" fill="#fff"/><ellipse cx="49.500" cy="54" rx="8.500" ry="7" fill="#fff"/></svg></div>
  <div class="app"><svg viewBox="0 0 79 80"><rect width="79" height="80" rx="18" fill="url(#gPod)"/><g fill="none" stroke="#fff" stroke-width="3.400" stroke-linecap="round"><path d="M25.500 61a27 27 0 1 1 28 0"/><path d="M28 50a17.300 17.300 0 1 1 23 0"/></g><circle cx="39.500" cy="35.500" r="6.500" fill="#fff"/><path d="M32.500 49c0-5.500 14-5.500 14 0 0 4-2 14-3.200 19-.8 3.500-6.800 3.500-7.600 0-1.200-5-3.200-15-3.200-19z" fill="#fff"/></svg></div>
  <div class="app run"><svg viewBox="0 0 79 80"><rect width="79" height="80" rx="18" fill="url(#gTv)"/><g transform="translate(10.500 24.500) scale(.9)" fill="#fff"><path d="M17.500 0c.2 2-.5 3.700-1.600 5-1.100 1.300-2.700 2.200-4.300 2.100-.2-1.900.6-3.700 1.600-4.800C14.300 1 16 .1 17.500 0zM24.500 22.500c-.7 1.700-1.100 2.400-2 3.800-1.300 1.900-3 3.700-5 3.700-1.900 0-2.400-1.200-4.800-1.200S9.700 30 7.900 30c-2 0-3.600-1.900-4.900-3.800C-.5 21-1 14.500 1.200 11.200 2.700 8.900 5.100 7.500 7.400 7.500c2.300 0 3.700 1.300 5.600 1.300 1.900 0 3-1.300 5.700-1.300 2 0 4.100 1.100 5.600 3-5 2.700-4.200 9.800.2 12z"/></g><text x="35.500" y="52.500" font-size="34" font-weight="500" fill="#fff" textLength="32" lengthAdjust="spacingAndGlyphs">tv</text></svg></div>
  <div class="app"><svg viewBox="0 0 79 80"><rect width="79" height="80" rx="18" fill="#fff"/><path d="M18 17h13L63 63.500H48L16 19z" fill="#e8435a"/><path d="M16 42l16 21.500H18a2 2 0 0 1-2-2zM63 38L47 17h14a2 2 0 0 1 2 2z" fill="#e8435a"/></svg></div>
  <div class="app"><svg viewBox="0 0 79 80"><rect width="79" height="80" rx="18" fill="url(#gNumbers)"/><g fill="#f4f4f4"><rect x="15" y="52.500" width="10" height="16" rx="1.500"/><rect x="28.500" y="38" width="10" height="30.500" rx="1.500"/><rect x="42" y="12" width="10" height="56.500" rx="1.500"/><rect x="55.500" y="27" width="10" height="41.500" rx="1.500"/></g></svg></div>
  <div class="app run"><svg viewBox="0 0 79 80"><rect width="79" height="80" rx="18" fill="url(#gBlue)"/><path d="M20 12h39c1.500 0 2 1 2.300 2.500L63 34c0 1.500-1 2-2 2H18c-1 0-2-.5-2-2l1.700-19.500C18 13 18.500 12 20 12z" fill="#f7f7f8"/><path d="M16 31h47v5H17z" fill="#d5d6da"/><circle cx="39" cy="21" r="7.500" fill="#e8843a"/><path d="M39 21v-7.500a7.500 7.500 0 0 1 7.500 7.500z" fill="#56a9e8"/><path d="M39 21h7.500a7.500 7.500 0 0 1-7.500 7.500z" fill="#6cc258"/><path d="M39 21v-7.500A7.500 7.500 0 0 0 31.500 21z" fill="#c7404f"/><path d="M37.700 36h3.600v30h-3.600z" fill="#eceef2"/><path d="M30 66h19c2 0 3 1 3 3H27c0-2 1-3 3-3z" fill="#f2f3f5"/></svg></div>
  <div class="app"><svg viewBox="0 0 79 80"><rect width="79" height="80" rx="18" fill="url(#gPages)"/><path d="M15 67h52" stroke="#ffd9ac" stroke-width="2.500" stroke-linecap="round"/><path d="M60.500 15c3-1 5 1 4 4L23 63.500 13.500 67.500 16 59z" fill="#fbfbfb"/><path d="M38 38.500l4 4" stroke="#c9c9c9" stroke-width="2"/><path d="M16 62l4 3-6.500 2.500z" fill="#4a4a4a"/></svg></div>
  <div class="app"><svg viewBox="0 0 79 80"><rect width="79" height="80" rx="18" fill="url(#gStore)"/><g stroke="#fff" stroke-width="6.500" stroke-linecap="round"><path d="M43.500 18L29 46M21.500 58.500L20.500 61.500M35 18l25.500 43.500M15.500 49H40M56 49h8"/></g></svg></div>
  <div class="app"><svg viewBox="0 0 79 80"><rect width="79" height="80" rx="18" fill="url(#gSet)"/><circle cx="39.500" cy="40" r="32" fill="#a7a9ab"/><circle cx="39.500" cy="40" r="32" fill="none" stroke="#2b2b2c" stroke-width="5" stroke-dasharray="1.900 1.450"/><circle cx="39.500" cy="40" r="28.500" fill="#2d2d2e"/><circle cx="39.500" cy="40" r="25" fill="none" stroke="#b4b6b8" stroke-width="3.200"/><circle cx="39.500" cy="40" r="17" fill="none" stroke="#77797b" stroke-width="3" stroke-dasharray="1.600 1"/><circle cx="39.500" cy="40" r="13" fill="#58595b"/><g stroke="#b9bbbd" stroke-width="3.600"><path d="M39.500 40h25M39.500 40L27 18.400M39.500 40L27 61.600"/></g><circle cx="39.500" cy="40" r="4.500" fill="#c4c6c8"/><circle cx="39.500" cy="40" r="1.600" fill="#333"/></svg><span class="badge">1</span></div>
  <div class="app run"><svg viewBox="0 0 79 80"><rect width="79" height="80" rx="18" fill="#fff"/><g fill="none" stroke="#4a93c8" stroke-width="1.900"><path d="M22 22.500V16a3 3 0 0 1 3-3h23a3 3 0 0 1 3 3v6.500z"/><path d="M18 51h-3.500a3 3 0 0 1-3-3V26.500a3 3 0 0 1 3-3h43a3 3 0 0 1 3 3V34M18.500 38.500h28"/><path d="M22.500 38.500V61a3 3 0 0 0 3 3H46"/><path d="M29 47.500h16M29 55h16"/><rect x="50" y="37.500" width="18" height="29.500" rx="4"/><path d="M57 41h4M56 49h7M56 55h7"/></g><path d="M16 29.500h5" stroke="#4a93c8" stroke-width="2.200"/></svg></div>
  <div class="app run"><svg viewBox="0 0 79 80"><rect width="79" height="80" rx="18" fill="url(#gMail)"/><rect x="11.500" y="22" width="56" height="36" rx="3.500" fill="#f0f0ee"/><path d="M12.500 56l19-18M66.500 56l-19-18" stroke="#b3b3b1" stroke-width="1.400"/><path d="M13 23.500l22 22c3 3 6 3 9 0l22-22" fill="#fafaf8" stroke="#b3b3b1" stroke-width="1.500"/></svg><span class="badge">1,781</span></div>
  <div class="app run"><svg viewBox="0 0 79 80"><rect width="79" height="80" rx="18" fill="#f3f1ef"/><path d="M9.700 23A34 34 0 0 1 69.200 23H39.500z" fill="#dc4a3e"/><path d="M39.500 74A34 34 0 0 1 9.700 23L25.500 48z" fill="#4aa557"/><path d="M69.200 23A34 34 0 0 1 39.500 74L54 48.500 39.500 23z" fill="#f4c03f"/><path d="M9.700 23L25 49.500 40 30V23z" fill="#dc4a3e"/><path d="M39.500 74l15.500-26-10 3-19.500-2z" fill="#4aa557"/><circle cx="39.500" cy="39.500" r="16.500" fill="#fff"/><circle cx="39.500" cy="39.500" r="13" fill="#3f82f0"/></svg></div>
  <div class="app"><svg viewBox="0 0 79 80"><rect width="79" height="80" rx="18" fill="#fff"/><circle cx="40.500" cy="21.500" r="8.500" fill="#7a80e0"/><circle cx="58" cy="23.500" r="5.800" fill="#4e56b8"/><path d="M50 33h15a2 2 0 0 1 2 2v14c0 5-3 9-8 9s-9-3-9-9z" fill="#4e56b8"/><path d="M27 33h25a2 2 0 0 1 2 2v17a14 14 0 0 1-28 0V34z" fill="#7f85e6"/><rect x="9" y="25" width="30.500" height="30" rx="2.500" fill="#4147a8"/><text x="24.300" y="48" text-anchor="middle" font-size="22" font-weight="600" fill="#fff">T</text></svg></div>
  <i class="rule"></i>
  <div class="app run"><svg viewBox="0 0 79 80"><rect width="79" height="80" rx="18" fill="#fff"/><path d="M53 12.500L15 52c-1 1-1 2 0 3l3 2.500c1 .8 2 .8 3 0L53 33z" fill="#2c6db3"/><path d="M53 67.500L12.500 31c-1-1-1-2 0-3l3-2.500c1-.8 2-.8 3 0L53 50z" fill="#3583cc"/><path d="M52.500 12l12 5.500c1.500.7 2 1.700 2 3v39c0 1.300-.5 2.300-2 3L52.500 68z" fill="#4ba0ec"/></svg></div>
  <div class="app run"><svg viewBox="0 0 79 80"><rect width="79" height="80" rx="18" fill="#fff"/><path d="M20 16a3 3 0 0 1 3-3h20v53.500H23a3 3 0 0 1-3-3z" fill="#3f9d66"/><path d="M43 13h20a3 3 0 0 1 3 3v10H43z" fill="#57bd86"/><path d="M20 26h23v14H20z" fill="#3b9560"/><path d="M43 26h23v14H43z" fill="#45ad74"/><path d="M43 40h23v13H43z" fill="#35814f"/><path d="M20 53h46v10.500a3 3 0 0 1-3 3H23a3 3 0 0 1-3-3z" fill="#2b5e3c"/><rect x="7" y="25" width="30" height="30" rx="2.500" fill="#2f7a48"/><text x="22" y="48" text-anchor="middle" font-size="22" font-weight="600" fill="#fff">X</text></svg></div>
  <div class="app run"><svg class="term" viewBox="0 0 79 80"><rect width="79" height="80" rx="18" fill="url(#gTerm)"/><rect x="2.500" y="2.500" width="74" height="75" rx="16" fill="#0a0a0a"/><rect x="8" y="8.500" width="63" height="63" rx="11" fill="#232324"/><path d="M14 15.500l8.500 5-8.500 5.500M26.500 30h11" fill="none" stroke="#fff" stroke-width="2.400"/></svg></div>
  <div class="app run"><svg viewBox="0 0 79 80"><rect width="79" height="80" rx="18" fill="#a52517"/><path d="M20 62c-4-4 4-12 20-14.500S63 47 61.500 52 47 50 41 36 36 17 39 17s5 10-3 27-14 21-16 18z" fill="none" stroke="#fff" stroke-width="3.800" stroke-linejoin="round"/></svg></div>
  <div class="app run"><svg viewBox="0 0 79 80"><rect width="79" height="80" rx="18" fill="url(#gKey)"/><circle cx="40" cy="15.500" r="10.500" fill="none" stroke="#8e9091" stroke-width="2.300"/><g stroke="#6f7072" stroke-width=".7"><path d="M27 24c4-4 12-2 12 4v18l-2 3v22l-3 3-3-3V47z" fill="#a8adb0"/><path d="M18 38l6 0v28l-3 4-4-4z" fill="#8e9192"/><path d="M40 24c6-5 14 2 14 10 0 6-2 10-3 12l9 20-2 4-5-2-9-22c-6-4-8-14-4-22z" fill="#c0d0d4"/></g><circle cx="22.500" cy="42" r="16" fill="#ee8b2e" stroke="#f9c083" stroke-width="1.200"/><rect x="15" y="40" width="12" height="9" rx="1.500" transform="rotate(18 21 44)" fill="#fff"/><path d="M23 40c1-4 5-5 7-2l1 4" fill="none" stroke="#fff" stroke-width="2"/></svg></div>
  <div class="app run"><svg viewBox="0 0 79 80"><rect width="79" height="80" rx="18" fill="#f3f3f4"/><path d="M26 10.500h28c3 0 5 3 5.500 7h-39c.5-4 2.500-7 5.500-7z" fill="#58595b"/><path d="M17 21h46c5 0 8 3 8 7v29c0 2-1 3-3 3H11c-2 0-3-1-3-3V28c0-4 4-7 9-7z" fill="url(#gPrn)"/><circle cx="56.500" cy="29.500" r="3.500" fill="#fff"/><path d="M21.500 40h37v29.500h-37z" fill="#fff" stroke="#4d4e50" stroke-width="2"/><path d="M28 47.500h24M28 57.500h24" stroke="#3d3e40" stroke-width="2.600"/></svg></div>
  <i class="rule"></i>
  <div class="app"><svg viewBox="0 0 79 80"><path d="M10.500 2l3-7H45l23 8v82H10.500z" fill="#f4f4f4"/><path d="M10.500 3h5v82h-5z" fill="#1a1a1a"/><path d="M34 -5h10v7H34z" fill="#333"/><path d="M45-5L67 24H46z" fill="#fff" stroke="#d0d0d0"/><circle cx="19" cy="14" r="3.500" fill="none" stroke="#999"/><path d="M25 14h11M16 29h20M38 27h16M16 33h13M38 32h12" stroke="#bbb" stroke-width="1.500"/><path d="M15.500 37.500h49" stroke="#555" stroke-width="2.500"/><path d="M16 42h48M16 46h40M16 50h48M16 54h40M16 58h44M25 61h30" stroke="#c4c4c4" stroke-width="1.400"/><path d="M16 68c6-3 10 1 20 1" fill="none" stroke="#777" stroke-width="1.500"/><path d="M16 74h12M16 77h12" stroke="#ccc"/></svg></div>
  <div class="app"><svg viewBox="0 0 79 80"><path d="M8 8l5-9 8 1 6-7 8 5 9-5 7 6 10 0 7 9-4 6H12z" fill="#e4e4e4"/><path d="M20 3l10-3 4 5-8 4zM44 2l8 1 3 8-9 1zM62 4l5 4-4 3z" fill="#555"/><path d="M28 2l8 0-3 4z" fill="#55c9d0"/><path d="M47 3l5 2-3 5z" fill="#3b62b5"/><path d="M37 5l2 7h-5z" fill="#d5763a"/><path d="M4 4c18 12 53 12 70 0L65 75c-2 12-49 12-52 0z" fill="url(#gTrash)"/><path d="M4 4c18 13 53 13 70 0" fill="none" stroke="#b5b8bb" stroke-width="1.200"/><path d="M13 73c8 8 44 8 52 0-1 14-50 14-52 0z" fill="#b7babd" opacity=".5"/><path d="M27 18c8 6 20 8 28 2" fill="none" stroke="#c5c8cb" stroke-width="4" opacity=".4"/></svg></div>
</footer>
</body>
</html>
```
FILE: styles.css
```css
* { box-sizing: border-box; }
body {
  margin: 0;
  width: 3584px;
  height: 2240px;
  overflow: hidden;
  position: relative;
  display: flex;
  flex-direction: column;
  background: linear-gradient(#c4c2ba 0 100px, #0a0a06 101px);
  font-family: Inter, "Liberation Sans", sans-serif;
  --tab-bg: #202124;
}
.defs { position: absolute; }
.wallpaper { position: absolute; left: 0; bottom: 0; width: 3584px; height: 172px; }

/* Menu bar */
.menubar {
  position: relative;
  height: 49px;
  padding: 0 38px 1px 41px;
  display: flex;
  justify-content: space-between;
  background: linear-gradient(90deg, #f3f1ed, #ecebe4 45%, #e6e4de 70%, #e4e1da);
  border-bottom: 1px solid #a9aaa8;
  font-size: 26px;
  color: #111;
}
.menus, .status { display: flex; align-items: center; }
.menus { gap: 42.5px; letter-spacing: -.38px; }
.menu { line-height: 47px; }
.apple { width: 26px; height: 30px; margin-top: -2px; }
.app-name { font-weight: 700; letter-spacing: 0; margin-left: -3px; }
.status { gap: 38px; color: #232220; }
.clock { display: flex; line-height: 47px; margin-left: -8px; }
.time { margin: 0 4px 0 15px; letter-spacing: 1.5px; }
.pm { letter-spacing: -1px; }

/* Browser window */
.window {
  position: relative;
  height: 2039px;
  display: flex;
  flex-direction: column;
  border-radius: 20px;
  overflow: hidden;
  box-shadow: 0 0 0 1px #000;
}
.chrome {
  height: 235px;
  background: #35363a;
  border: solid #626466;
  border-width: 3px 1px 2px;
  border-radius: 20px 20px 0 0;
}
.tabstrip {
  height: 82px;
  margin: 0 -1px;
  display: flex;
  align-items: flex-end;
  background: #202124;
  border-radius: 18px 18px 0 0;
}
.lights { width: 185px; height: 82px; padding: 29px 0 0 42px; display: flex; gap: 16px; }
.lights i { width: 24px; height: 24px; border-radius: 50%; }
.red { background: #ed6a5e; }
.amber { background: #f4be4f; }
.green { background: #61c554; }
.tab { width: 242px; height: 68px; padding-left: 23px; display: flex; align-items: center; }
.tab.narrow { width: 240px; padding-left: 22px; }
.fav { width: 32px; height: 32px; flex: none; }
.title {
  width: 112px;
  margin-left: 17px;
  overflow: hidden;
  white-space: nowrap;
  font-size: 24px;
  line-height: 32px;
  font-weight: 500;
  letter-spacing: -.4px;
  color: #fff;
  -webkit-mask-image: linear-gradient(90deg, #000 70px, transparent 110px);
  mask-image: linear-gradient(90deg, #000 70px, transparent 110px);
}
.title.full { -webkit-mask-image: none; mask-image: none; }
.x { width: 20px; height: 20px; margin-left: 17px; flex: none; }
.sep { width: 2px; height: 40px; margin-left: auto; background: #5c5d60; }
.tab.active {
  --tab-bg: #35363a;
  position: relative;
  width: 242px;
  background: #35363a;
  border-radius: 16px 16px 0 0;
}
.tab.active::before, .tab.active::after {
  content: "";
  position: absolute;
  bottom: 0;
  width: 16px;
  height: 16px;
  background: radial-gradient(circle at 0 0, transparent 15.5px, #35363a 16px);
}
.tab.active::before { left: -16px; }
.tab.active::after { right: -16px; background: radial-gradient(circle at 100% 0, transparent 15.5px, #35363a 16px); }
.plus { width: 26px; height: 26px; margin: 0 0 21px 30px; }
.chev { width: 20px; height: 14px; margin: 0 50px 27px auto; }

.toolbar { height: 84px; padding: 0 11px; display: flex; align-items: center; }
.btn { width: 64px; height: 64px; display: flex; align-items: center; justify-content: center; }
.omnibox {
  flex: 1;
  height: 68px;
  margin: 0 12px 0 13px;
  padding: 0 21px 0 22px;
  display: flex;
  align-items: center;
  border-radius: 34px;
  background: #202124;
}
.url { margin: 0 auto 0 16px; font-size: 28px; letter-spacing: -.13px; color: #919395; }
.url b { font-weight: 400; letter-spacing: 1.4px; color: #fff; }
.share { margin-right: 37px; }
.avatar {
  width: 44px;
  height: 44px;
  border-radius: 50%;
  background: #d94b78;
  color: #fff;
  font-size: 24px;
  line-height: 45px;
  text-align: center;
}
.bookmarks {
  height: 56px;
  padding-left: 25px;
  display: flex;
  align-items: center;
  gap: 32.5px;
  font-size: 24px;
  font-weight: 500;
  letter-spacing: -.15px;
  line-height: 28px;
  color: #fff;
}
.bm { display: flex; align-items: center; gap: 13.5px; }
.bm span { margin-top: -2px; }

/* Page */
.page { flex: 1; background: #f8f9fb; color: #212529; font-size: 32px; line-height: 48px; }
.container { width: 2220px; margin: 0 auto; padding-top: 42px; }
h1 {
  margin: 0 0 16px;
  font-size: 64px;
  line-height: 76.8px;
  font-weight: 500;
  letter-spacing: -2.3px;
  color: #3579f6;
}
.sort { margin: 0 0 38px; letter-spacing: -.3px; word-spacing: -1.7px; }
.sort a { font-weight: 700; letter-spacing: 0; color: #3579f6; }
.sort a:first-of-type { letter-spacing: -.3px; }
.courses { margin: 0; padding: 0; list-style: none; display: flex; flex-direction: column; gap: 20px; }
.courses li {
  height: 92px;
  padding: 21px 20px 0;
  border: 2px solid #dcdcdd;
  border-radius: 10px;
  background: #fff;
  box-shadow: 0 4px 8px rgba(0, 0, 0, .1);
  white-space: nowrap;
  letter-spacing: -.59px;
}
.courses li:nth-child(2) { letter-spacing: -.65px; }
.courses li:nth-child(3) { letter-spacing: -.69px; }

/* Dock */
.dock {
  position: relative;
  width: 3408px;
  height: 128px;
  margin: 14px 0 0 88px;
  padding: 17px 4px 0;
  display: flex;
  border: 2px solid rgba(255, 255, 255, .2);
  border-radius: 42px;
  background: linear-gradient(90deg, #3e3016 0, #332612 4%, #25221a 11%, #2f2316 20%, #22221a 26%, #1d2018 42%, #27231a 55%, #2d2116 66%, #3b2512 77%, #302716 85%, #2d2816);
  background-clip: padding-box;
  box-shadow: 0 0 80px rgba(0, 0, 0, .25);
}
.app { position: relative; width: 106.4px; flex: none; }
.app > svg { display: block; width: 79px; height: 80px; margin: 0 auto; overflow: visible; }
.app > .term { transform: translateX(2px); }
.run::after {
  content: "";
  display: block;
  width: 8px;
  height: 8px;
  margin: 17px auto 0;
  border-radius: 50%;
  background: #a9a08c;
}
.badge {
  position: absolute;
  top: -9px;
  right: 0;
  min-width: 38px;
  height: 38px;
  padding: 0 5px;
  border-radius: 19px;
  background: #df4c40;
  color: #fff;
  font-size: 23px;
  line-height: 38px;
  letter-spacing: -1.1px;
  text-align: center;
}
.rule { width: 2px; height: 96px; margin: -3px 22px 0 24px; flex: none; background: rgba(255, 255, 255, .25); }
```
